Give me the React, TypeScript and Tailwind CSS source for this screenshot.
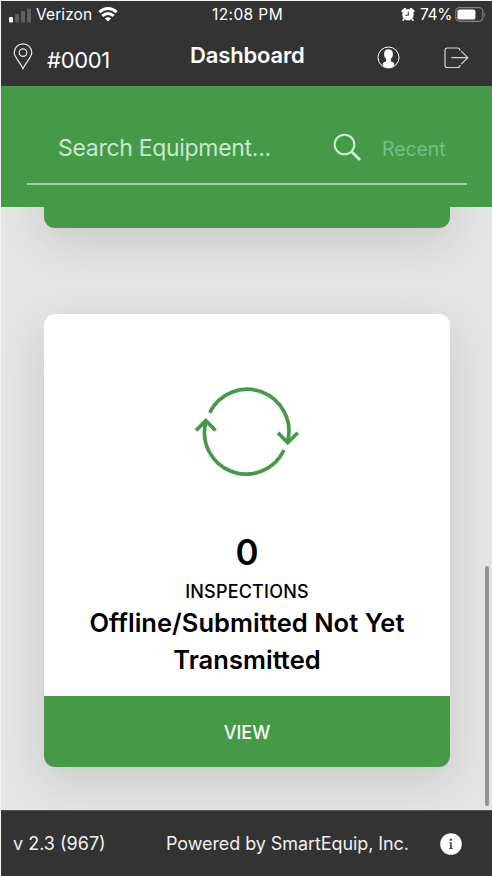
function StatusBar() {
  return (
    <div className="flex h-[27px] items-center text-[15.5px] leading-none">
      <svg className="ml-[8px] mt-px shrink-0" width="23" height="15" viewBox="0 0 23 15">
        <rect x="0" y="9" width="4" height="5.500" rx="1" fill="#fff" />
        <rect x="6" y="6" width="4" height="8.500" rx="1" fill="#5f5f5f" />
        <rect x="12" y="3" width="4" height="11.500" rx="1" fill="#5f5f5f" />
        <rect x="18" y="0.500" width="4" height="14" rx="1" fill="#5f5f5f" />
      </svg>
      <span className="ml-[4px] w-[62px] shrink-0 whitespace-nowrap tracking-[0.1px]">Verizon</span>
      <svg className="shrink-0" width="20" height="15" viewBox="0 0 20 15" fill="none" stroke="#fff" strokeWidth="2.9">
        <path d="M1.3 5.2Q10-2.2 18.7 5.2" />
        <path d="M4.3 8.8Q10 4 15.7 8.8" />
        <path d="M6.9 11.4Q10 9 13.1 11.4L10 14.5Z" fill="#fff" stroke="none" />
      </svg>
      <span className="ml-[94px] w-[186px] shrink-0 whitespace-nowrap tracking-[0.4px]">12:08 PM</span>
      <svg className="ml-[3px] shrink-0" width="14" height="15" viewBox="0 0 14 15">
        <circle cx="7" cy="7.700" r="5.700" fill="#fff" />
        <path d="M1.500 4.200 4 1.900M12.500 4.200 10 1.900" stroke="#fff" strokeWidth="2.200" strokeLinecap="round" />
        <path d="M3.200 11.800 2 13.300M10.800 11.800 12 13.300" stroke="#fff" strokeWidth="1.500" strokeLinecap="round" />
        <path d="M7.300 4.800V8.200H4.300" fill="none" stroke="#333" strokeWidth="1.100" />
      </svg>
      <span className="ml-[5px] w-[35px] shrink-0 whitespace-nowrap tracking-[-0.3px]">74%</span>
      <svg className="shrink-0" width="31" height="15" viewBox="0 0 31 15">
        <rect x="0.7" y="0.7" width="27.2" height="13.6" rx="4" fill="none" stroke="#858585" strokeWidth="1.2" />
        <rect x="2.4" y="2.4" width="18" height="10.2" rx="2.2" fill="#fff" />
        <path d="M29.4 5q1.4 2.5 0 5z" fill="#858585" />
      </svg>
    </div>
  );
}

function Header() {
  return (
    <div className="flex h-[58px] items-start">
      <svg className="ml-[12px] mt-[15px] shrink-0" width="20" height="27" viewBox="0 0 20 27" fill="none" stroke="#e8e8e8" strokeWidth="1.2">
        <path d="M10 25.6C7.8 20 1.2 14.5 1.2 9.6a8.8 8.8 0 0 1 17.6 0C18.8 14.5 12.2 20 10 25.6Z" />
        <circle cx="10" cy="9.6" r="3.8" />
      </svg>
      <span className="ml-[14px] mt-[20px] w-[143px] whitespace-nowrap text-[22px] leading-[24px] tracking-[-0.3px]">#0001</span>
      <span className="mt-[15px] w-[187px] whitespace-nowrap text-[22px] font-semibold leading-[24px] tracking-[-0.15px]">Dashboard</span>
      <svg className="mt-[18px] shrink-0" width="23" height="23" viewBox="0 0 23 23">
        <circle cx="11.500" cy="11.500" r="10.500" fill="none" stroke="#fff" strokeWidth="1" />
        <path d="M11.500 3.300C14.300 3.300 16 5.100 15.900 7.900C15.800 10.200 15.200 11.600 14.300 12.600C13.700 13.300 13.500 14.600 14.200 15.400L16.300 16.500C17.200 17 17.400 18.400 17.200 19.700Q14.600 22 11.500 22T5.800 19.700C5.600 18.400 5.800 17 6.700 16.500L8.800 15.400C9.500 14.600 9.300 13.300 8.700 12.600C7.800 11.600 7.200 10.200 7.100 7.900C7 5.100 8.700 3.300 11.500 3.300Z" fill="#fff" />
      </svg>
      <svg className="ml-[44px] mt-[19px] shrink-0" width="25" height="22" viewBox="0 0 25 22" fill="none" stroke="#d5d5d5" strokeWidth="1.2">
        <path d="M16 3.600Q15.900 1 13.700 1H3.200Q1 1 1 3.200V18.300Q1 20.500 3.200 20.500H13.700Q15.900 20.500 16 17.900" />
        <path d="M7.500 10.700H23.800M17.300 4.200 23.800 10.700 17.300 17.200" />
      </svg>
    </div>
  );
}

function SearchBar() {
  return (
    <div className="h-[121px] bg-[#449a46] pl-[26px] pr-[25px]">
      <div className="flex h-[97px] items-start pl-[31px]">
        <span className="mt-[48px] w-[275px] whitespace-nowrap text-[23px] leading-[28px] tracking-[-0.3px] text-[#cae7d2]">Search Equipment...</span>
        <svg className="mt-[47px] shrink-0" width="29" height="29" viewBox="0 0 29 29" fill="none" stroke="#d2ebd9">
          <circle cx="11.500" cy="11.500" r="9.800" strokeWidth="2" />
          <path d="M18.500 18.500 27 27" strokeWidth="3" />
        </svg>
        <span className="ml-[20px] mt-[49px] whitespace-nowrap text-[19.500px] leading-[28px] tracking-[-0.1px] text-[#78bd87]">Recent</span>
      </div>
      <div className="h-[2px] bg-[#a3cfaa]" />
    </div>
  );
}

function SyncIcon() {
  return (
    <svg className="mt-[72px] shrink-0" width="106" height="90" viewBox="0 0 106 90" fill="none" stroke="#449a46" strokeWidth="3.700">
      <path d="M15.700 26.700A41.700 41.700 0 0 1 93.400 56" />
      <path d="M90 64A41.700 41.700 0 0 1 12.200 34.600" />
      <path d="M2 44.500 11.800 34.600 21.600 44.500" />
      <path d="M84 46.800 93.700 56.700 103.800 46.800" />
    </svg>
  );
}

function InspectionCard() {
  return (
    <div className="mt-[86px] flex h-[453px] w-[406px] shrink-0 flex-col items-center rounded-[11px] bg-white text-black shadow-[0_14px_46px_rgba(0,0,0,0.13)]">
      <SyncIcon />
      <div className="mt-[54px] text-[35px] font-semibold leading-[44px]">0</div>
      <div className="mt-[7px] text-[18px] font-medium leading-[22px] tracking-[0.2px]">INSPECTIONS</div>
      <div className="mt-px whitespace-nowrap text-center text-[25.500px] font-semibold leading-[37px] tracking-[0.03px]">
        Offline/Submitted Not Yet
        <br />
        Transmitted
      </div>
      <button className="mt-auto h-[71px] w-full rounded-b-[11px] bg-[#449a46] pt-px text-[18px] font-medium text-white">VIEW</button>
    </div>
  );
}

function Footer() {
  return (
    <div className="flex h-[66px] items-center border-t border-[#555] bg-[#333] pl-[12px] text-[18px] text-[#f0f0f0]">
      <span className="w-[153px] whitespace-nowrap">v 2.3 (967)</span>
      <span className="w-[274px] whitespace-nowrap tracking-[-0.08px]">Powered by SmartEquip, Inc.</span>
      <svg className="shrink-0" width="22" height="22" viewBox="0 0 22 22">
        <circle cx="11" cy="11" r="10.800" fill="#fff" />
        <circle cx="10.800" cy="6.700" r="1.300" fill="#555" />
        <path d="M9 9.200h2.900v5.900h1v.9H8.900v-.9h1v-5H9z" fill="#555" />
      </svg>
    </div>
  );
}

export default function App() {
  return (
    <div className="flex h-[876px] w-[492px] flex-col overflow-hidden bg-[#f0f3f1] pl-px pt-px font-['Inter',sans-serif] text-white">
      <div className="h-[85px] shrink-0 bg-[#333]">
        <StatusBar />
        <Header />
      </div>
      <div className="relative z-10 shrink-0">
        <SearchBar />
      </div>
      <div className="relative flex h-[603px] shrink-0 flex-col items-start overflow-hidden bg-[#e5e5e5] pl-[43px]">
        <div className="-mt-[430px] h-[451px] w-[406px] shrink-0 rounded-[11px] bg-[#449a46] shadow-[0_14px_46px_rgba(0,0,0,0.13)]" />
        <InspectionCard />
        <div className="absolute bottom-[4px] right-[3px] h-[240px] w-[4px] rounded-full bg-[#929292]" />
      </div>
      <Footer />
    </div>
  );
}
